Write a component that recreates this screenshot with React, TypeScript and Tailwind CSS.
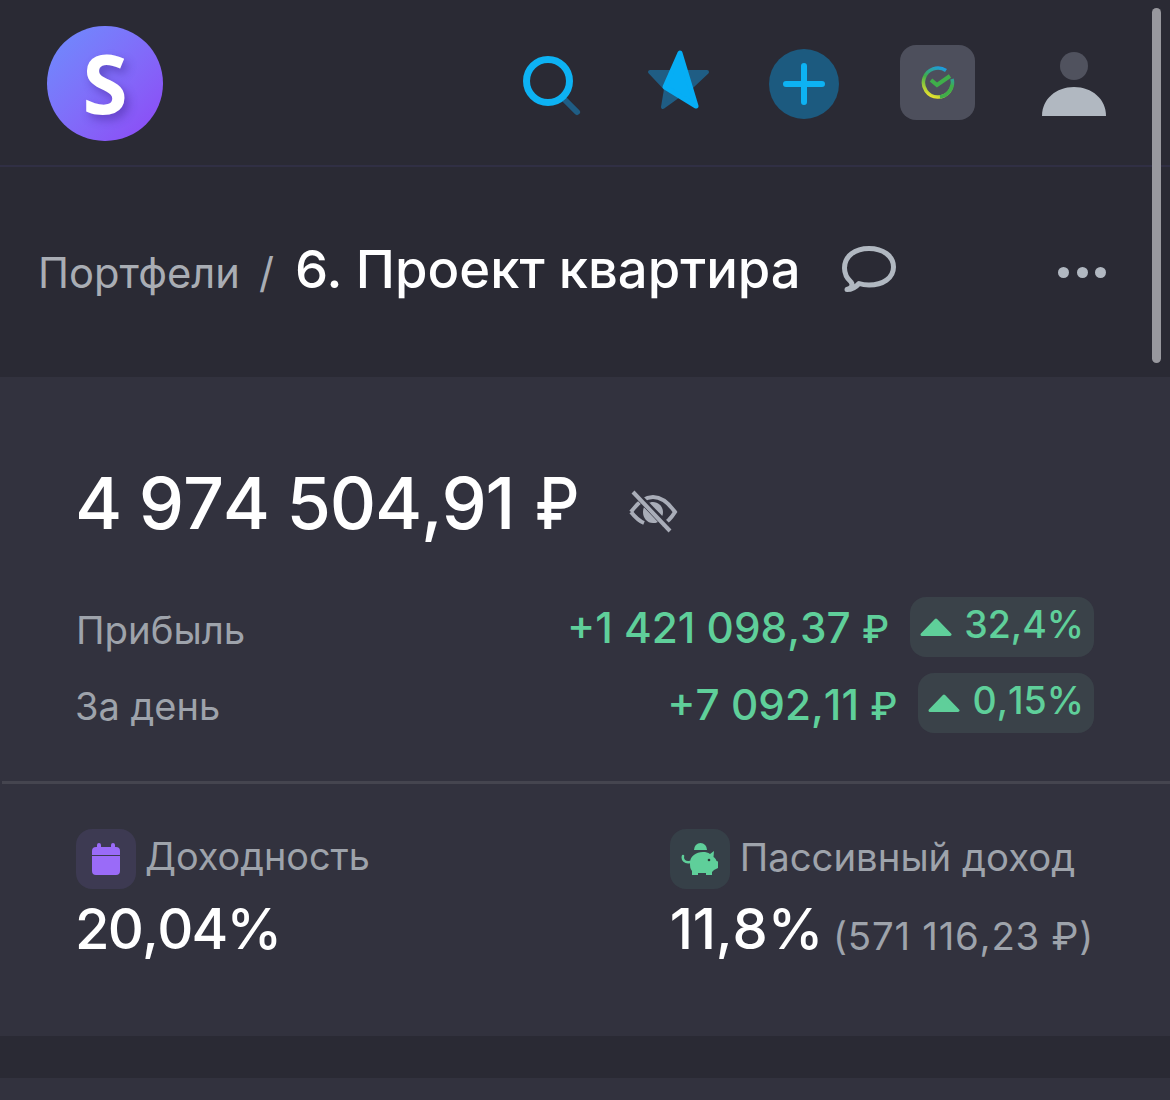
import React from "react";

const Badge = ({ value, className }: { value: string; className: string }) => (
  <div className={`flex h-[60px] items-center rounded-[16px] bg-[#3a4249] pl-[10px] pr-[10px] text-[37.5px] font-[450] leading-none text-[#5fcf9a] [font-kerning:none] ${className}`}>
    <svg width="32" height="20" viewBox="0 0 32 20" className="mr-[12px]">
      <path d="M16 3 L30 17.5 H2 Z" fill="#5fcf9a" stroke="#5fcf9a" strokeWidth="3" strokeLinejoin="round" />
    </svg>
    <span className="relative -top-[2px]">{value}</span>
  </div>
);

export default function App() {
  return (
    <div className="relative h-[1100px] w-[1170px] overflow-hidden bg-[#2a2a34] font-['Inter','Liberation_Sans',sans-serif]">
      {/* Scrollbar */}
      <div className="absolute left-[1152px] top-[8px] h-[355px] w-[9px] rounded-full bg-[#98989e]" />

      {/* Header */}
      <header className="flex h-[167px] items-start border-b-2 border-[#302f44] pl-[47px] pr-[63px]">
        <div className="mt-[26px] flex h-[115px] w-[116px] items-center justify-center rounded-full bg-gradient-to-br from-[#6b8dfd] to-[#8d45f5]">
          <span className="relative -top-[2px] text-[82px] font-bold leading-none text-white [text-shadow:4px_5px_10px_rgba(60,30,140,0.45)] font-['Open_Sans',sans-serif]">S</span>
        </div>
        <div className="ml-[360px] mt-[50px] flex items-start">
          <svg width="60" height="68" viewBox="0 0 60 68">
            <line x1="39" y1="47" x2="54" y2="62" stroke="#1f5d84" strokeWidth="6" strokeLinecap="round" />
            <circle cx="25" cy="31" r="21.5" fill="none" stroke="#0db2f3" strokeWidth="7" />
          </svg>
          <svg width="66" height="66" viewBox="0 0 66 66" className="ml-[63px] mt-[-2px]">
            <path d="M4 24 H61 L44 40 L35 46 L17 59 L20 41 Z" fill="#1f5d84" stroke="#1f5d84" strokeWidth="4" strokeLinejoin="round" />
            <path d="M34 5 L50 58 L19 39 Z" fill="#06aef5" stroke="#06aef5" strokeWidth="5" strokeLinejoin="round" />
          </svg>
          <div className="ml-[57px] mt-[-1px] flex h-[70px] w-[70px] items-center justify-center rounded-full bg-[#1c5a7f]">
            <svg width="44" height="44" viewBox="0 0 44 44">
              <path d="M22 4 V40 M4 22 H40" stroke="#0db2f3" strokeWidth="6" strokeLinecap="round" />
            </svg>
          </div>
          <div className="ml-[61px] mt-[-5px] flex h-[75px] w-[75px] items-center justify-center rounded-[16px] bg-[#4d4f5c]">
            <svg width="34" height="34" viewBox="0 0 34 34">
              <defs>
                <linearGradient id="sb" x1="0.7" y1="0" x2="0.3" y2="1">
                  <stop offset="0" stopColor="#1d9be0" />
                  <stop offset="0.45" stopColor="#3fae4a" />
                  <stop offset="1" stopColor="#e6e22e" />
                </linearGradient>
              </defs>
              <path d="M25 4.5 A14.5 14.5 0 1 0 31 13" fill="none" stroke="url(#sb)" strokeWidth="3.5" />
              <path d="M31 19 A14.5 14.5 0 0 1 19 31" fill="none" stroke="#3fae4a" strokeWidth="3.5" />
              <path d="M10 14 L16 19 L29 10" fill="none" stroke="#3fae4a" strokeWidth="4" />
            </svg>
          </div>
          <svg width="64" height="64" viewBox="0 0 64 64" className="ml-[67px] mt-[2px]">
            <ellipse cx="32" cy="14" rx="14" ry="14" fill="#50525e" />
            <path d="M0 64 C0 47 14 35 32 35 C50 35 64 47 64 64 Z" fill="#b1b8c1" />
          </svg>
        </div>
      </header>

      {/* Breadcrumb */}
      <section className="flex h-[210px] items-center pb-[4px] pl-[38px] pr-[64px]">
        <span className="relative top-[4px] text-[41.7px] leading-none text-[#a9adb4]">Портфели</span>
        <span className="relative top-[4px] ml-[19px] text-[41.7px] leading-none text-[#a9adb4]">/</span>
        <span className="relative -top-[1px] ml-[21px] text-[52.6px] font-medium leading-none text-white">6. Проект квартира</span>
        <svg width="54" height="46" viewBox="0 0 54 46" className="relative -top-[1px] ml-[41px]">
          <path d="M5 43.5 C10 42 11 39 9 36 C4.5 32 2.5 27 2.5 22 C2.5 10 13 2.5 27 2.5 C41 2.5 51.5 10 51.5 21 C51.5 32 41 39 27 39 C23 39 20 38.5 17 37.5 C14 41 10 43.5 5 43.5 Z" fill="none" stroke="#b1b8c1" strokeWidth="5" strokeLinejoin="round" />
        </svg>
        <div className="relative top-[2px] ml-auto flex gap-[7.5px]">
          <span className="h-[11px] w-[11px] rounded-full bg-[#b1b8c1]" />
          <span className="h-[11px] w-[11px] rounded-full bg-[#b1b8c1]" />
          <span className="h-[11px] w-[11px] rounded-full bg-[#b1b8c1]" />
        </div>
      </section>

      {/* Card */}
      <section className="h-[659px] bg-[#32323e]">
        <div className="pl-[76px] pr-[76px]">
          <div className="flex items-center pt-[90px]">
            <span className="-ml-[1px] whitespace-nowrap text-[72px] font-medium leading-none tracking-[-1.3px] text-white [font-kerning:none]">
              4 974 504,91 <span className="ml-[3px] inline-block origin-left scale-x-[0.86]">₽</span>
            </span>
            <svg width="50" height="44" viewBox="0 0 50 44" className="ml-[43px] mt-[18px]">
              <path d="M3 22 C10 12 17 7 25 7 C33 7 40 12 47 22 C42 30 38 33 34 35 M16 33 C11 31 7 27 3 22" fill="none" stroke="#a9adb8" strokeWidth="4" />
              <path d="M25 12 C31 12 35 17 35 22 C35 24 34.5 26 33.5 27 L20 13.5 C21.5 12.5 23 12 25 12 Z M16 17 L30 32 C28 33 27 33 25 33 C19 33 15 28 15 22 C15 20 15.5 18.5 16 17 Z" fill="#a9adb8" />
              <line x1="7" y1="3" x2="44" y2="41" stroke="#32323e" strokeWidth="7" />
              <line x1="5" y1="2" x2="42" y2="41" stroke="#a9adb8" strokeWidth="4" />
            </svg>
          </div>
          <div className="mt-[58px] flex h-[60px] items-center justify-between">
            <span className="relative top-[3px] text-[38.4px] leading-none text-[#9ea3ab]">Прибыль</span>
            <div className="flex items-center">
              <span className="relative top-[1px] text-[42.3px] font-[450] leading-none text-[#5fcf9a] [font-kerning:none]">+1 421 098,37 <span className="text-[38px]">₽</span></span>
              <Badge value="32,4%" className="ml-[21px]" />
            </div>
          </div>
          <div className="mt-[16px] flex h-[60px] items-center justify-between">
            <span className="relative top-[3px] -ml-[1px] text-[38px] leading-none text-[#9ea3ab]">За день</span>
            <div className="flex items-center">
              <span className="relative top-[2px] text-[42.3px] font-[450] leading-none text-[#5fcf9a] [font-kerning:none]">+7 092,11 <span className="text-[38px]">₽</span></span>
              <Badge value="0,15%" className="ml-[21px]" />
            </div>
          </div>
        </div>

        <div className="ml-[2px] mt-[48px] h-[3px] bg-[#45454f]" />

        <div className="flex px-[76px] pt-[45px]">
          <div className="w-[594px]">
            <div className="flex items-center">
              <div className="flex h-[60px] w-[60px] items-center justify-center rounded-[16px] bg-[#3d3a52]">
                <svg width="28" height="32" viewBox="0 0 28 32">
                  <path d="M7 0 a2 2 0 0 1 2 2 v2 h10 v-2 a2 2 0 0 1 4 0 v2 h1 a4 4 0 0 1 4 4 v4 h-28 v-4 a4 4 0 0 1 4 -4 h1 v-2 a2 2 0 0 1 2 -2 Z M0 13 h28 v15 a4 4 0 0 1 -4 4 h-20 a4 4 0 0 1 -4 -4 Z" fill="#9a6bf8" />
                </svg>
              </div>
              <span className="relative -top-[2px] ml-[9px] text-[37.8px] leading-none text-[#9ea3ab]">Доходность</span>
            </div>
            <div className="-ml-[1px] mt-[12px] text-[56px] font-medium leading-none tracking-[-1.8px] text-white [font-kerning:none]">20,04%</div>
          </div>
          <div>
            <div className="flex items-center">
              <div className="flex h-[60px] w-[60px] items-center justify-center rounded-[16px] bg-[#364048]">
                <svg width="38" height="34" viewBox="0 0 38 34">
                  <path d="M13 8 a6.5 7 0 0 1 13 0 Z" fill="#5fcf9a" />
                  <path d="M9 21 C9 14 15 10 22 10 C25 10 27 10.5 29 12 L33 9 L32.5 15 C34 16 35 17 35.5 19 L37 19.5 V26 L33 28 L31 30 V33 H25 V31 H17 V33 H11 V29 C9 27 9 24 9 21 Z" fill="#5fcf9a" />
                  <path d="M9 20 C4 21 1 18 2 14" fill="none" stroke="#5fcf9a" strokeWidth="2.5" strokeLinecap="round" />
                  <circle cx="28" cy="18" r="1.3" fill="#2a3a38" />
                </svg>
              </div>
              <span className="relative -top-[2px] ml-[10px] text-[38.3px] leading-none text-[#9ea3ab]">Пассивный доход</span>
            </div>
            <div className="mt-[12px] flex items-baseline whitespace-nowrap">
              <span className="text-[56px] font-medium leading-none tracking-[-0.2px] text-white [font-kerning:none]">11,8%</span>
              <span className="relative top-[1px] ml-[10px] text-[38.4px] leading-none tracking-[0.75px] text-[#9ea3ab] [font-kerning:none]">(571 116,23 ₽)</span>
            </div>
          </div>
        </div>
      </section>

      {/* Gap */}
      <div className="h-[42px] bg-[#2a2a34]" />
      <div className="h-[22px] bg-[#32323e]" />
    </div>
  );
}
